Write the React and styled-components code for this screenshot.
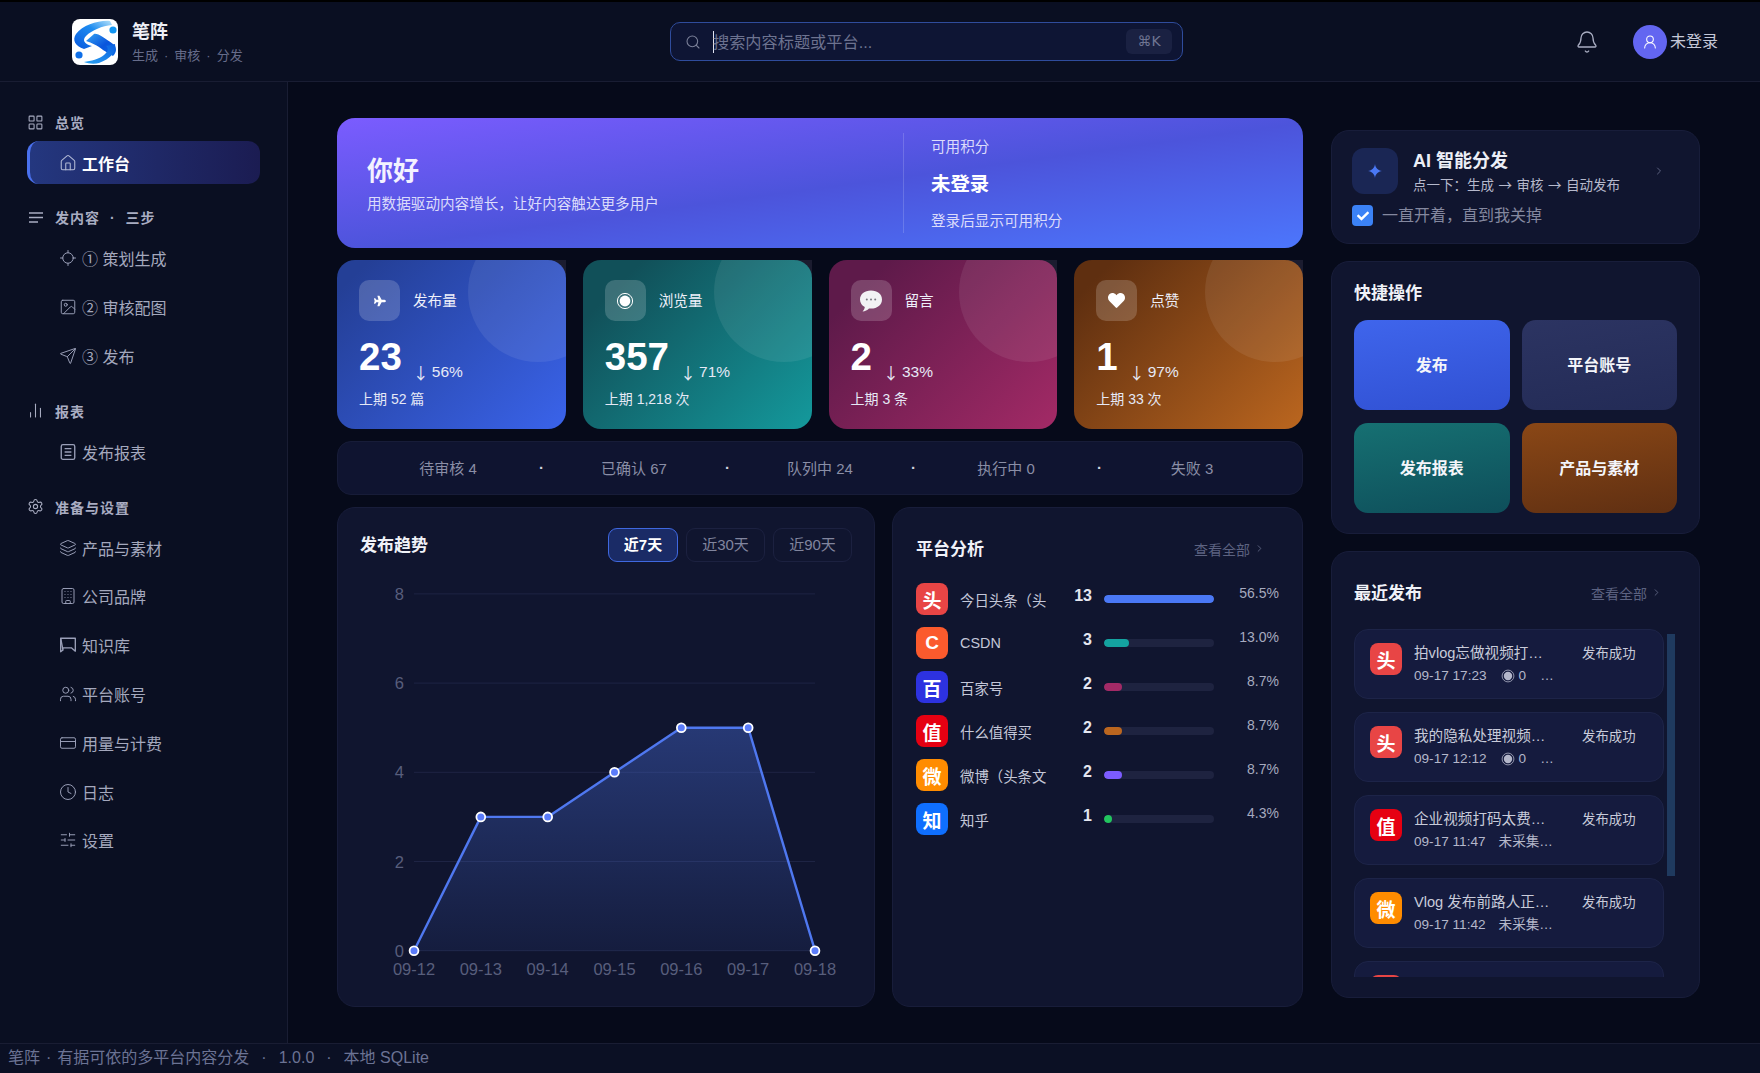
import React from "react";
import styled, { createGlobalStyle } from "styled-components";
import {
  Bell,
  Building,
  ChartNoAxesColumn,
  ChevronRight,
  Clock,
  CreditCard,
  House,
  Image,
  LayoutGrid,
  Layers,
  Locate,
  Search,
  Send,
  Settings,
  SlidersHorizontal,
  UserRound,
  Users,
} from "lucide-react";
import { FaHeart, FaPlane, FaCheck } from "react-icons/fa";

const GlobalStyle = createGlobalStyle`
  html, body {
    margin: 0;
    height: 100%;
    background: #060a1a;
    overflow: hidden;
  }
  body {
    font-family: "Liberation Sans", "Noto Sans CJK SC", sans-serif;
    color: #fff;
  }
  * { box-sizing: border-box; }
`;

const Shell = styled.div`
  display: flex;
  flex-direction: column;
  height: 1073px;
  border-top: 2px solid #000;
`;

const Header = styled.header`
  display: grid;
  grid-template-columns: 670px 513px 1fr;
  align-items: center;
  flex: none;
  height: 80px;
  background: #0a0f22;
  border-bottom: 1px solid #191d33;
`;

const Brand = styled.div`
  display: flex;
  align-items: center;
  gap: 14px;
  padding-left: 72px;
`;

const LogoBox = styled.div`
  width: 46px;
  height: 46px;
  border-radius: 8px;
  background: #fff;
  overflow: hidden;
  svg { display: block; }
`;

const BrandText = styled.div`
  padding-top: 3px;
`;

const BrandName = styled.div`
  font-size: 18px;
  font-weight: 700;
  line-height: 24px;
  color: #eef0f6;
`;

const BrandSub = styled.div`
  font-size: 13px;
  line-height: 20px;
  margin-top: 2px;
  word-spacing: 2.4px;
  color: #666c8a;
  white-space: pre;
`;

const SearchBox = styled.div`
  display: flex;
  align-items: center;
  height: 39px;
  padding: 0 10px 0 14px;
  background: #0e1534;
  border: 1px solid #2f4c9c;
  border-radius: 10px;
  color: #7b8099;
`;

const SearchText = styled.div`
  flex: 1;
  margin-left: 12px;
  font-size: 16.2px;
  color: #6d7390;
  line-height: 22px;
  box-shadow: inset 1px 0 #dfe3f2;
`;

const Kbd = styled.div`
  width: 46px;
  height: 25px;
  border-radius: 6px;
  background: #1a2142;
  color: #6f7592;
  font-size: 14px;
  line-height: 25px;
  text-align: center;
  font-family: "DejaVu Sans", "Liberation Sans", sans-serif;
`;

const HeaderRight = styled.div`
  display: flex;
  align-items: center;
  justify-content: flex-end;
  padding-right: 42px;
  color: #a9adc2;
`;

const Avatar = styled.div`
  display: flex;
  align-items: center;
  justify-content: center;
  width: 34px;
  height: 34px;
  margin-left: 34px;
  border-radius: 50%;
  background: #6366f1;
  color: #fff;
`;

const UserName = styled.div`
  margin-left: 3px;
  padding-bottom: 3px;
  font-size: 16px;
  color: #c5c8d8;
`;

const Body = styled.div`
  display: flex;
  flex: 1;
  min-height: 0;
`;

const Sidebar = styled.nav`
  flex: none;
  width: 288px;
  padding: 30px 27px 0;
  background: #0a0f22;
  border-right: 1px solid #191d33;
`;

const Group = styled.div`
  margin-bottom: 23px;
`;

const GroupLabel = styled.div`
  display: flex;
  align-items: center;
  gap: 11px;
  height: 20px;
  margin-bottom: 9px;
  font-size: 14px;
  font-weight: 700;
  letter-spacing: 1px;
  word-spacing: 5px;
  color: #a9adc2;
  white-space: pre;
  svg { flex: none; }
`;

const NavItem = styled.div`
  display: flex;
  align-items: center;
  gap: 5px;
  width: 233px;
  height: ${(p) => (p.$active ? "43px" : "44px")};
  margin-top: 4.8px;
  padding-left: ${(p) => (p.$active ? "29px" : "32px")};
  border-radius: 12px;
  font-size: 16px;
  white-space: pre;
  font-weight: ${(p) => (p.$active ? 700 : 400)};
  color: ${(p) => (p.$active ? "#fff" : "#a4a8bd")};
  background: ${(p) =>
    p.$active ? "linear-gradient(90deg, #24377f, #1b1c52)" : "none"};
  border-left: ${(p) => (p.$active ? "3px solid #4a71ee" : "none")};
  svg {
    flex: none;
    color: ${(p) => (p.$active ? "#b4bbd6" : "#9a9fb8")};
  }
`;

const Main = styled.main`
  display: grid;
  grid-template-columns: 966px 369px;
  column-gap: 28px;
  align-items: start;
  flex: 1;
  padding: 36px 0 0 49px;
`;

const LeftColumn = styled.div`
  display: flex;
  flex-direction: column;
  gap: 12px;
`;

const RightColumn = styled.div`
  display: flex;
  flex-direction: column;
  gap: 17px;
  margin-top: 12px;
`;

const Hero = styled.section`
  display: flex;
  align-items: center;
  height: 130px;
  border-radius: 18px;
  background: linear-gradient(to bottom right, #7b5cff 0%, #4c54db 52%, #4c76fc 100%);
`;

const HeroLeft = styled.div`
  width: 566px;
  padding-left: 30px;
`;

const HeroTitle = styled.div`
  font-size: 26px;
  font-weight: 700;
  line-height: 36px;
  color: #f3f2ff;
`;

const HeroSub = styled.div`
  margin-top: 5px;
  font-size: 14.6px;
  line-height: 20px;
  color: #dcdcfb;
`;

const HeroRight = styled.div`
  height: 100px;
  padding: 4px 0 0 27px;
  border-left: 1px solid rgba(255, 255, 255, 0.16);
`;

const HeroLabel = styled.div`
  margin-top: ${(p) => p.$top || 0}px;
  font-size: 14.6px;
  line-height: 20px;
  color: #dcdcfb;
`;

const HeroValue = styled.div`
  margin-top: 13px;
  font-size: 19.4px;
  font-weight: 700;
  line-height: 28px;
  color: #fff;
`;

const StatGrid = styled.section`
  display: grid;
  grid-template-columns: repeat(4, 1fr);
  gap: 17px;
`;

const StatCell = styled.div`
  height: 169px;
  background: linear-gradient(#1b1c2f, #1b1c2f) top right / 16px 16px no-repeat;
`;

const StatCard = styled.div`
  position: relative;
  height: 100%;
  padding: 20px 22px;
  overflow: hidden;
  border-radius: 18px;
  background: ${(p) => p.$bg};
  &::after {
    content: "";
    position: absolute;
    top: -38px;
    right: -42px;
    width: 140px;
    height: 140px;
    border-radius: 50%;
    background: rgba(255, 255, 255, 0.08);
  }
`;

const StatHead = styled.div`
  display: flex;
  align-items: center;
  gap: 13px;
  font-size: 14.6px;
  color: #eef0fa;
`;

const StatLabel = styled.span`
  padding-bottom: 2px;
`;

const StatIcon = styled.div`
  display: flex;
  align-items: center;
  justify-content: center;
  width: 41px;
  height: 41px;
  border-radius: 10px;
  background: rgba(255, 255, 255, 0.18);
  color: #fff;
`;

const StatNumbers = styled.div`
  display: flex;
  align-items: flex-end;
  gap: 11px;
  margin-top: 14px;
`;

const StatValue = styled.div`
  font-size: 38.5px;
  font-weight: 700;
  line-height: 44px;
  color: #fff;
`;

const StatDelta = styled.div`
  display: flex;
  align-items: center;
  gap: 3px;
  font-size: 15.5px;
  line-height: 20px;
  margin-bottom: -3px;
  color: #e6e9f6;
  white-space: pre;
`;

const DeltaArrow = styled.span`
  font-family: "Noto Sans CJK SC", sans-serif;
  font-size: 16px;
`;

const StatPrev = styled.div`
  margin-top: 10px;
  font-size: 14px;
  line-height: 20px;
  color: #e6e9f6;
`;

const StatusBar = styled.section`
  display: grid;
  grid-template-columns: 1fr 4px 1fr 4px 1fr 4px 1fr 4px 1fr;
  align-items: center;
  height: 54px;
  padding: 0 19px 2px;
  border-radius: 14px;
  background: #0f1430;
  border: 1px solid #171c38;
  font-size: 15px;
  color: #8a8ea6;
  text-align: center;
`;

const StatusDot = styled.span`
  font-weight: 700;
  color: #cfd2df;
`;

const ChartRow = styled.div`
  display: grid;
  grid-template-columns: 538px 411px;
  gap: 17px;
`;

const Panel = styled.section`
  border-radius: 18px;
  background: #10152f;
  border: 1px solid #181d3a;
  padding: ${(p) => p.$pad || "20px 22px"};
  height: ${(p) => (p.$height ? `${p.$height}px` : "auto")};
`;

const PanelHead = styled.div`
  display: flex;
  align-items: center;
  justify-content: space-between;
`;

const PanelTitle = styled.h3`
  margin: 0;
  padding-top: ${(p) => p.$nudge || 0}px;
  font-size: 17px;
  font-weight: 700;
  line-height: 24px;
  color: #f0f2f8;
`;

const ViewAll = styled.div`
  display: flex;
  align-items: center;
  gap: 4px;
  padding: 0 ${(p) => p.$right}px 3px 0;
  font-size: 14px;
  color: #5c6280;
`;

const Tabs = styled.div`
  display: flex;
  gap: 8px;
`;

const Tab = styled.div`
  width: ${(p) => (p.$active ? "70px" : "79px")};
  height: 34px;
  border-radius: 9px;
  font-size: 15px;
  line-height: 32px;
  text-align: center;
  font-weight: ${(p) => (p.$active ? 700 : 400)};
  color: ${(p) => (p.$active ? "#fff" : "#81859e")};
  background: ${(p) => (p.$active ? "#1a2b66" : "transparent")};
  border: 1px solid ${(p) => (p.$active ? "#3f68e0" : "#1c2140")};
`;

const ChartSvg = styled.svg`
  display: block;
  margin-top: 13px;
  text {
    font-family: "Liberation Sans", sans-serif;
    font-size: 16.5px;
    fill: #585e7c;
  }
`;

const PlatformList = styled.div`
  margin-top: 15px;
`;

const PlatformRow = styled.div`
  display: flex;
  align-items: center;
  height: 44px;
`;

const Badge = styled.div`
  display: flex;
  align-items: center;
  justify-content: center;
  flex: none;
  width: 32px;
  height: 32px;
  border-radius: 8px;
  background: ${(p) => p.$color};
  font-size: 19px;
  font-weight: 700;
  color: #fff;
`;

const PlatformName = styled.div`
  width: 87px;
  margin-left: 12px;
  white-space: nowrap;
  font-size: 14.4px;
  color: #c4c7d8;
`;

const PlatformCount = styled.div`
  width: 45px;
  padding-bottom: 6px;
  text-align: right;
  font-size: 16px;
  font-weight: 700;
  color: #e4e6f0;
`;

const BarTrack = styled.div`
  width: 110px;
  height: 8px;
  margin-left: 12px;
  border-radius: 4px;
  background: #1e2340;
  overflow: hidden;
`;

const BarFill = styled.div`
  height: 100%;
  border-radius: 4px;
  background: ${(p) => p.$color};
`;

const PlatformPct = styled.div`
  flex: 1;
  padding-bottom: 13px;
  text-align: right;
  font-size: 14px;
  color: #a6aabf;
`;

const AiTop = styled.div`
  display: flex;
  align-items: center;
  gap: 15px;
`;

const AiIcon = styled.div`
  display: flex;
  align-items: center;
  justify-content: center;
  width: 46px;
  height: 46px;
  border-radius: 12px;
  background: #1a2654;
`;

const AiText = styled.div`
  flex: 1;
`;

const AiTitle = styled.div`
  padding-top: 1px;
  font-size: 18px;
  font-weight: 700;
  line-height: 24px;
  color: #eceef6;
`;

const AiSub = styled.div`
  margin-top: 1px;
  font-family: "Noto Sans CJK SC", sans-serif;
  font-size: 13.5px;
  line-height: 20px;
  word-spacing: 1.5px;
  color: #b6b9cc;
`;

const AiChevron = styled.div`
  display: flex;
  margin-right: 14px;
  color: #5c6280;
`;

const CheckRow = styled.div`
  display: flex;
  align-items: center;
  gap: 9px;
  margin-top: 11px;
  font-size: 16px;
  line-height: 21px;
  color: #84889f;
`;

const CheckBox = styled.div`
  display: flex;
  align-items: center;
  justify-content: center;
  width: 21px;
  height: 21px;
  border-radius: 4px;
  background: #3b82f6;
  color: #fff;
`;

const QuickGrid = styled.div`
  display: grid;
  grid-template-columns: 1fr 1fr;
  grid-auto-rows: 90px;
  gap: 13px 12px;
  margin-top: 14px;
`;

const QuickButton = styled.div`
  display: flex;
  align-items: center;
  justify-content: center;
  padding-bottom: 2px;
  border-radius: 14px;
  font-size: 16px;
  font-weight: 700;
  color: #f4f5fa;
  background: ${(p) => p.$bg};
`;

const RecentWrap = styled.div`
  position: relative;
  height: 348px;
  margin-top: 23px;
  overflow: hidden;
`;

const ScrollThumb = styled.div`
  position: absolute;
  top: 5px;
  left: 313px;
  width: 8px;
  height: 242px;
  background: #1f3a5f;
`;

const RecentRow = styled.div`
  display: flex;
  gap: 12px;
  width: 310px;
  height: 70px;
  margin-bottom: 13px;
  padding: 13px 15px;
  border-radius: 14px;
  background: #151b3e;
  border: 1px solid #1d2448;
`;

const RecentBody = styled.div`
  width: 156px;
`;

const RecentTitle = styled.div`
  font-size: 14.6px;
  line-height: 20px;
  white-space: nowrap;
  color: #c8cbda;
`;

const RecentMeta = styled.div`
  display: flex;
  align-items: center;
  gap: ${(p) => p.$gap || 14}px;
  margin-top: 3px;
  font-size: 13.6px;
  line-height: 20px;
  white-space: nowrap;
  color: #b4b7ca;
`;

const ViewCount = styled.span`
  display: inline-flex;
  align-items: center;
  gap: 4px;
`;

const RecentStatus = styled.div`
  margin-top: 1px;
  font-size: 13.4px;
  line-height: 20px;
  white-space: nowrap;
  color: #c8cbda;
`;

const Footer = styled.footer`
  flex: none;
  height: 30px;
  padding-left: 8px;
  background: #0b1024;
  border-top: 1px solid #191d33;
  font-size: 16px;
  line-height: 28px;
  color: #6b7394;
  white-space: pre;
`;

const FooterDot = styled.span`
  margin: 0 ${(p) => p.$gap}px;
`;

const Logo = () => (
  <svg width="46" height="46" viewBox="0 0 46 46">
    <defs>
      <linearGradient id="lgA" x1="0" y1="1" x2="1" y2="0">
        <stop offset="0" stopColor="#0857dd" />
        <stop offset="0.6" stopColor="#1e8cf0" />
        <stop offset="1" stopColor="#b6e2fa" />
      </linearGradient>
      <linearGradient id="lgB" x1="0" y1="0" x2="1" y2="1">
        <stop offset="0" stopColor="#35a4f4" />
        <stop offset="0.55" stopColor="#0a55dc" />
        <stop offset="1" stopColor="#0a6ae6" />
      </linearGradient>
      <linearGradient id="lgC" x1="0" y1="1" x2="1" y2="0">
        <stop offset="0" stopColor="#2ba3f2" />
        <stop offset="1" stopColor="#0a5fe0" />
      </linearGradient>
    </defs>
    <path d="M38 2C27 1 11 6 4 15C0 21 3 27 12 30L20 27C12 25 10 21 14 17C20 11 30 7 40 6Z" fill="url(#lgA)" />
    <path d="M22 15C26 14 32 19 41 25C45 28 45 33 41 37L31 31C25 26 20 24 14 22Z" fill="url(#lgB)" />
    <path d="M43 25C45 33 38 40 27 44C23 45 17 45 12 43C19 42 27 40 32 36C36 33 37 29 34 27Z" fill="url(#lgC)" />
    <circle cx="41" cy="11" r="3.6" fill="#1396f2" />
    <circle cx="7" cy="36" r="3.6" fill="#0f6fe8" />
  </svg>
);

const LogIcon = () => (
  <svg width="18" height="18" viewBox="0 0 16 16" fill="none" stroke="currentColor" strokeWidth="1.2">
    <rect x="2" y="1.5" width="12" height="13" rx="1.5" />
    <path d="M5 5h6M5 8h6M5 11h6" />
  </svg>
);

const BookIcon = () => (
  <svg width="18" height="18" viewBox="0 0 16 16" fill="none" stroke="currentColor" strokeWidth="1.2">
    <path d="M1.5 2h13v11.5L11 10.5H3.5V12.500z" strokeLinejoin="round" />
    <path d="M1.5 2v12L3.5 12.500" strokeLinejoin="round" />
  </svg>
);

const ViewIcon = ({ size = 18 }) => (
  <svg width={size} height={size} viewBox="0 0 18 18">
    <circle cx="9" cy="9" r="7.6" fill="none" stroke="currentColor" strokeWidth="1" />
    <circle cx="9" cy="9" r="5.4" fill="currentColor" />
  </svg>
);

const Balloon = () => (
  <svg width="24" height="24" viewBox="0 0 24 24">
    <path d="M12 1.5C5.5 1.5 1 5.3 1 10.5c0 3.3 1.9 6 4.8 7.6-.2 1.7-1 3.2-2.3 4.4 2.6-.2 4.9-1.3 6.5-3 .7.1 1.3.1 2 .1 6.5 0 11-3.8 11-9.1S18.5 1.5 12 1.5z" fill="#f2f2f4" />
    <circle cx="7.8" cy="10.5" r="1" fill="#77777f" />
    <circle cx="12" cy="10.5" r="1" fill="#77777f" />
    <circle cx="16.2" cy="10.5" r="1" fill="#77777f" />
  </svg>
);

const Sparkle = () => (
  <svg width="14" height="14" viewBox="0 0 14 14">
    <path d="M7 0C7.5 4 10 6.5 14 7C10 7.5 7.5 10 7 14C6.5 10 4 7.5 0 7C4 6.5 6.5 4 7 0Z" fill="#4a78f5" />
  </svg>
);

const navGroups = [
  {
    label: "总览",
    icon: <LayoutGrid size={17} strokeWidth={1.5} />,
    items: [{ text: "工作台", icon: <House size={18} strokeWidth={1.4} />, active: true }],
  },
  {
    label: "发内容 · 三步",
    icon: <svg width="17" height="17" viewBox="0 0 17 17" stroke="currentColor" strokeWidth="1.3"><path d="M2 4h14M2 8.5h14M2 13h9" /></svg>,
    items: [
      { text: "① 策划生成", icon: <Locate size={18} strokeWidth={1.3} /> },
      { text: "② 审核配图", icon: <Image size={18} strokeWidth={1.3} /> },
      { text: "③ 发布", icon: <Send size={18} strokeWidth={1.3} /> },
    ],
  },
  {
    label: "报表",
    icon: <ChartNoAxesColumn size={17} strokeWidth={1.5} />,
    items: [{ text: "发布报表", icon: <LogIcon /> }],
  },
  {
    label: "准备与设置",
    icon: <Settings size={17} strokeWidth={1.5} />,
    items: [
      { text: "产品与素材", icon: <Layers size={18} strokeWidth={1.3} /> },
      { text: "公司品牌", icon: <Building size={18} strokeWidth={1.3} /> },
      { text: "知识库", icon: <BookIcon /> },
      { text: "平台账号", icon: <Users size={18} strokeWidth={1.3} /> },
      { text: "用量与计费", icon: <CreditCard size={18} strokeWidth={1.3} /> },
      { text: "日志", icon: <Clock size={18} strokeWidth={1.3} /> },
      { text: "设置", icon: <SlidersHorizontal size={18} strokeWidth={1.3} /> },
    ],
  },
];

const stats = [
  { label: "发布量", value: "23", delta: "56%", prev: "上期 52 篇", bg: "linear-gradient(135deg, #243f96 8%, #3a63ea)", icon: <FaPlane size={12} /> },
  { label: "浏览量", value: "357", delta: "71%", prev: "上期 1,218 次", bg: "linear-gradient(135deg, #115059 15%, #14999c)", icon: <ViewIcon /> },
  { label: "留言", value: "2", delta: "33%", prev: "上期 3 条", bg: "linear-gradient(135deg, #5e1a4a 15%, #a32a66)", icon: <Balloon /> },
  { label: "点赞", value: "1", delta: "97%", prev: "上期 33 次", bg: "linear-gradient(135deg, #5f2f10 10%, #bb661f)", icon: <FaHeart size={17} /> },
];

const statuses = ["待审核 4", "已确认 67", "队列中 24", "执行中 0", "失败 3"];

const platforms = [
  { mark: "头", color: "#e84545", name: "今日头条（头", count: 13, bar: "#4a78f5", width: 100, pct: "56.5%" },
  { mark: "C", color: "#fb5a2d", name: "CSDN", count: 3, bar: "#14a3a0", width: 23, pct: "13.0%" },
  { mark: "百", color: "#2d32e0", name: "百家号", count: 2, bar: "#a32a66", width: 16, pct: "8.7%" },
  { mark: "值", color: "#e60012", name: "什么值得买", count: 2, bar: "#bb661f", width: 16, pct: "8.7%" },
  { mark: "微", color: "#ff8c00", name: "微博（头条文", count: 2, bar: "#7c5cff", width: 16, pct: "8.7%" },
  { mark: "知", color: "#0f6fff", name: "知乎", count: 1, bar: "#22c55e", width: 7, pct: "4.3%" },
];

const quick = [
  { text: "发布", bg: "linear-gradient(170deg, #3f65ec, #3050d2)" },
  { text: "平台账号", bg: "linear-gradient(170deg, #2c3462, #232b56)" },
  { text: "发布报表", bg: "linear-gradient(170deg, #167072, #0e4e5a)" },
  { text: "产品与素材", bg: "linear-gradient(170deg, #8a4716, #5f2f12)" },
];

const recent = [
  { mark: "头", color: "#e84545", title: "拍vlog忘做视频打…", time: "09-17 17:23", views: true },
  { mark: "头", color: "#e84545", title: "我的隐私处理视频…", time: "09-17 12:12", views: true },
  { mark: "值", color: "#e60012", title: "企业视频打码太费…", time: "09-17 11:47" },
  { mark: "微", color: "#ff8c00", title: "Vlog 发布前路人正…", time: "09-17 11:42" },
];

const chartX = [54, 120.8, 187.7, 254.5, 321.3, 388.2, 455];
const chartDays = ["09-12", "09-13", "09-14", "09-15", "09-16", "09-17", "09-18"];
const chartValues = [0, 3, 3, 4, 5, 5, 0];
const zeroY = 375.7;
const unit = 44.6;
const chartPoints = chartValues.map((v, i) => [chartX[i], zeroY - v * unit]);
const linePath = chartPoints.map((p) => p.join(",")).join(" ");

function TrendChart() {
  return (
    <ChartSvg width="492" height="410" viewBox="0 0 492 410">
      <defs>
        <linearGradient id="areaFill" x1="0" y1="0" x2="0" y2="1">
          <stop offset="0" stopColor="#4f78f0" stopOpacity="0.36" />
          <stop offset="1" stopColor="#4f78f0" stopOpacity="0.08" />
        </linearGradient>
      </defs>
      {[0, 2, 4, 6, 8].map((v) => (
        <g key={v}>
          <line x1="54" x2="455" y1={zeroY - v * unit} y2={zeroY - v * unit} stroke="#1e2444" />
          <text x="44" y={zeroY - v * unit + 6} textAnchor="end">{v}</text>
        </g>
      ))}
      <polygon points={`${linePath} 455,${zeroY} 54,${zeroY}`} fill="url(#areaFill)" />
      <polyline points={linePath} fill="none" stroke="#4f78f0" strokeWidth="2.4" strokeLinejoin="round" />
      {chartPoints.map(([x, y]) => (
        <circle key={x} cx={x} cy={y} r="4.4" fill="#5b7cfa" stroke="#fff" strokeWidth="1.8" />
      ))}
      {chartDays.map((d, i) => (
        <text key={d} x={chartX[i]} y="400" textAnchor="middle">{d}</text>
      ))}
    </ChartSvg>
  );
}

export default function App() {
  return (
    <>
      <GlobalStyle />
      <Shell>
        <Header>
          <Brand>
            <LogoBox><Logo /></LogoBox>
            <BrandText>
              <BrandName>笔阵</BrandName>
              <BrandSub>生成 · 审核 · 分发</BrandSub>
            </BrandText>
          </Brand>
          <SearchBox>
            <Search size={16} strokeWidth={1.6} />
            <SearchText>搜索内容标题或平台...</SearchText>
            <Kbd>⌘K</Kbd>
          </SearchBox>
          <HeaderRight>
            <Bell size={24} strokeWidth={1.3} />
            <Avatar><UserRound size={16} strokeWidth={1.6} /></Avatar>
            <UserName>未登录</UserName>
          </HeaderRight>
        </Header>
        <Body>
          <Sidebar>
            {navGroups.map((group) => (
              <Group key={group.label}>
                <GroupLabel>{group.icon}{group.label}</GroupLabel>
                {group.items.map((item) => (
                  <NavItem key={item.text} $active={item.active}>
                    {item.icon}
                    {item.text}
                  </NavItem>
                ))}
              </Group>
            ))}
          </Sidebar>
          <Main>
            <LeftColumn>
              <Hero>
                <HeroLeft>
                  <HeroTitle>你好</HeroTitle>
                  <HeroSub>用数据驱动内容增长，让好内容触达更多用户</HeroSub>
                </HeroLeft>
                <HeroRight>
                  <HeroLabel>可用积分</HeroLabel>
                  <HeroValue>未登录</HeroValue>
                  <HeroLabel $top={13}>登录后显示可用积分</HeroLabel>
                </HeroRight>
              </Hero>
              <StatGrid>
                {stats.map((s) => (
                  <StatCell key={s.label}>
                    <StatCard $bg={s.bg}>
                      <StatHead>
                        <StatIcon>{s.icon}</StatIcon>
                        <StatLabel>{s.label}</StatLabel>
                      </StatHead>
                      <StatNumbers>
                        <StatValue>{s.value}</StatValue>
                        <StatDelta><DeltaArrow>↓</DeltaArrow>{s.delta}</StatDelta>
                      </StatNumbers>
                      <StatPrev>{s.prev}</StatPrev>
                    </StatCard>
                  </StatCell>
                ))}
              </StatGrid>
              <StatusBar>
                {statuses.map((s, i) => (
                  <React.Fragment key={s}>
                    {i > 0 && <StatusDot>·</StatusDot>}
                    <span>{s}</span>
                  </React.Fragment>
                ))}
              </StatusBar>
              <ChartRow>
                <Panel $height={500}>
                  <PanelHead>
                    <PanelTitle $nudge={2}>发布趋势</PanelTitle>
                    <Tabs>
                      <Tab $active>近7天</Tab>
                      <Tab>近30天</Tab>
                      <Tab>近90天</Tab>
                    </Tabs>
                  </PanelHead>
                  <TrendChart />
                </Panel>
                <Panel $height={500} $pad="30px 23px">
                  <PanelHead>
                    <PanelTitle>平台分析</PanelTitle>
                    <ViewAll $right={14}>查看全部<ChevronRight size={11} /></ViewAll>
                  </PanelHead>
                  <PlatformList>
                    {platforms.map((p) => (
                      <PlatformRow key={p.name}>
                        <Badge $color={p.color}>{p.mark}</Badge>
                        <PlatformName>{p.name}</PlatformName>
                        <PlatformCount>{p.count}</PlatformCount>
                        <BarTrack>
                          <BarFill $color={p.bar} style={{ width: `${p.width}%` }} />
                        </BarTrack>
                        <PlatformPct>{p.pct}</PlatformPct>
                      </PlatformRow>
                    ))}
                  </PlatformList>
                </Panel>
              </ChartRow>
            </LeftColumn>
            <RightColumn>
              <Panel $pad="17px 20px 17px">
                <AiTop>
                  <AiIcon><Sparkle /></AiIcon>
                  <AiText>
                    <AiTitle>AI 智能分发</AiTitle>
                    <AiSub>点一下：生成 → 审核 → 自动发布</AiSub>
                  </AiText>
                  <AiChevron><ChevronRight size={12} /></AiChevron>
                </AiTop>
                <CheckRow>
                  <CheckBox><FaCheck size={12} /></CheckBox>
                  一直开着，直到我关掉
                </CheckRow>
              </Panel>
              <Panel $pad="20px 22px 20px">
                <PanelTitle>快捷操作</PanelTitle>
                <QuickGrid>
                  {quick.map((q) => (
                    <QuickButton key={q.text} $bg={q.bg}>{q.text}</QuickButton>
                  ))}
                </QuickGrid>
              </Panel>
              <Panel $pad="30px 22px 20px">
                <PanelHead>
                  <PanelTitle>最近发布</PanelTitle>
                  <ViewAll $right={15}>查看全部<ChevronRight size={11} /></ViewAll>
                </PanelHead>
                <RecentWrap>
                  {recent.map((r) => (
                    <RecentRow key={r.title}>
                      <Badge $color={r.color}>{r.mark}</Badge>
                      <RecentBody>
                        <RecentTitle>{r.title}</RecentTitle>
                        {r.views ? (
                          <RecentMeta>
                            <span>{r.time}</span>
                            <ViewCount><ViewIcon size={14} /> 0</ViewCount>
                            <span>…</span>
                          </RecentMeta>
                        ) : (
                          <RecentMeta $gap={13}>
                            <span>{r.time}</span>
                            <span>未采集…</span>
                          </RecentMeta>
                        )}
                      </RecentBody>
                      <RecentStatus>发布成功</RecentStatus>
                    </RecentRow>
                  ))}
                  <RecentRow>
                    <Badge $color="#e84545" />
                  </RecentRow>
                  <ScrollThumb />
                </RecentWrap>
              </Panel>
            </RightColumn>
          </Main>
        </Body>
        <Footer>笔阵<FooterDot $gap={6}>·</FooterDot>有据可依的多平台内容分发<FooterDot $gap={12}>·</FooterDot>1.0.0<FooterDot $gap={12}>·</FooterDot>本地 SQLite</Footer>
      </Shell>
    </>
  );
}
